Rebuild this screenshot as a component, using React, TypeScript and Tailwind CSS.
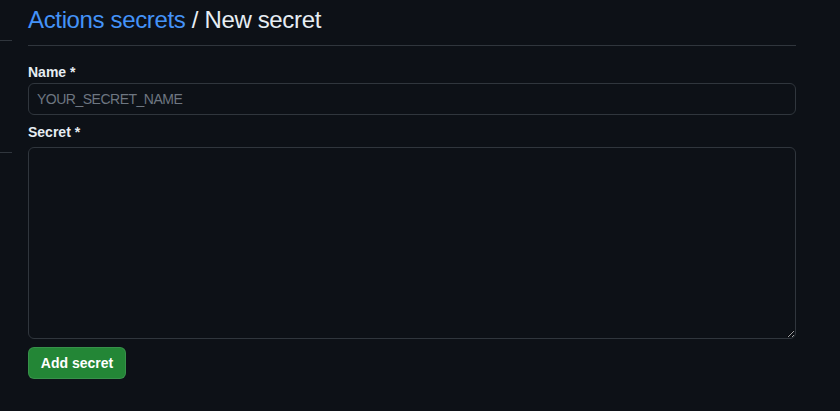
const App = () => {
  return (
    <div className="min-h-[411px] w-full bg-[#0d1117] text-[#e6edf3] font-['Liberation_Sans',Arial,sans-serif]">
      <div className="flex">
        {/* sidebar edge */}
        <div className="w-[12px] shrink-0">
          <div className="h-px mt-[40px] bg-[#30363d]" />
          <div className="h-px mt-[111px] bg-[#30363d]" />
        </div>

        <main className="ml-[16px] w-[768px] shrink-0">
          <div className="pt-[2px] pb-[7px] border-b border-[#30363d]">
            <h1 className="text-[24px] leading-[36px] font-normal tracking-[-0.35px]">
              <a href="#" className="text-[#4493f8]">Actions secrets</a>
              <span> / New secret</span>
            </h1>
          </div>

          <form className="pt-[16px]" onSubmit={(e) => e.preventDefault()}>
            <label className="block text-[14px] leading-[21px] font-bold">Name *</label>
            <input
              type="text"
              placeholder="YOUR_SECRET_NAME"
              className="block w-full h-[32px] px-[8px] rounded-[6px] border border-[#30363d] bg-[#0d1117] text-[14px] tracking-[-0.5px] text-[#e6edf3] placeholder:text-[#6e7681] outline-none"
            />

            <label className="block mt-[7px] text-[14px] leading-[21px] font-bold">Secret *</label>
            <textarea className="block mt-[4px] w-full h-[192px] rounded-[6px] border border-[#30363d] bg-[#0d1117] text-[14px] text-[#e6edf3] outline-none p-2" />

            <button
              type="submit"
              className="mt-[8px] h-[32px] w-[98px] rounded-[6px] border border-[#f0f6fc1a] bg-[#238636] text-white text-[14px] font-bold"
            >
              Add secret
            </button>
          </form>
        </main>
      </div>
    </div>
  );
};

export default App;
